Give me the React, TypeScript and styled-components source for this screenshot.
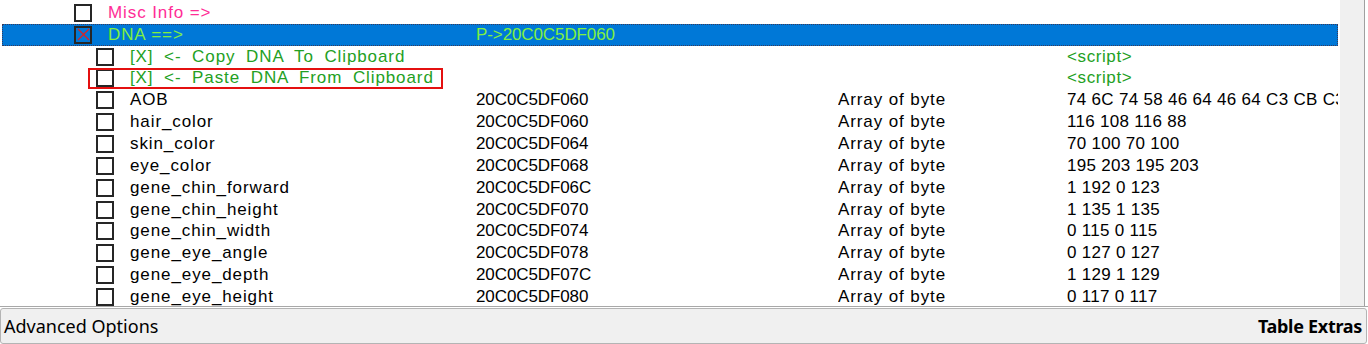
import styled, { createGlobalStyle } from "styled-components";

const Global = createGlobalStyle`
  html, body {
    margin: 0;
    padding: 0;
    background: #fff;
  }
`;

type Entry = {
  level: number;
  name: string;
  address?: string;
  type?: string;
  value?: string;
  color?: string;
  kind?: "group" | "script" | "plain";
  selected?: boolean;
  checked?: boolean;
  marked?: boolean;
};

const rows: Entry[] = [
  { level: 0, name: "Misc Info =>", color: "#ff2d96", kind: "group" },
  { level: 0, name: "DNA ==>", address: "P->20C0C5DF060", color: "#80f040", kind: "group", selected: true, checked: true },
  { level: 1, name: "[X] <- Copy DNA To Clipboard", value: "<script>", color: "#23a023", kind: "script" },
  { level: 1, name: "[X] <- Paste DNA From Clipboard", value: "<script>", color: "#23a023", kind: "script", marked: true },
  { level: 1, name: "AOB", address: "20C0C5DF060", type: "Array of byte", value: "74 6C 74 58 46 64 46 64 C3 CB C3 CB" },
  { level: 1, name: "hair_color", address: "20C0C5DF060", type: "Array of byte", value: "116 108 116 88" },
  { level: 1, name: "skin_color", address: "20C0C5DF064", type: "Array of byte", value: "70 100 70 100" },
  { level: 1, name: "eye_color", address: "20C0C5DF068", type: "Array of byte", value: "195 203 195 203" },
  { level: 1, name: "gene_chin_forward", address: "20C0C5DF06C", type: "Array of byte", value: "1 192 0 123" },
  { level: 1, name: "gene_chin_height", address: "20C0C5DF070", type: "Array of byte", value: "1 135 1 135" },
  { level: 1, name: "gene_chin_width", address: "20C0C5DF074", type: "Array of byte", value: "0 115 0 115" },
  { level: 1, name: "gene_eye_angle", address: "20C0C5DF078", type: "Array of byte", value: "0 127 0 127" },
  { level: 1, name: "gene_eye_depth", address: "20C0C5DF07C", type: "Array of byte", value: "1 129 1 129" },
  { level: 1, name: "gene_eye_height", address: "20C0C5DF080", type: "Array of byte", value: "0 117 0 117" },
];

export default function App() {
  return (
    <Window>
      <Global />
      <ListBox>
        <Tree>
          {rows.map((r, i) => (
            <Row key={i} $selected={!!r.selected}>
              <NameCell $level={r.level}>
                <Check>
                  {r.checked && (
                    <svg width="13" height="13" viewBox="0 0 13 13">
                      <path d="M1 1 L12 12 M12 1 L1 12" stroke="#e02020" strokeWidth="1.2" />
                    </svg>
                  )}
                </Check>
                <Label $color={r.color} $script={r.kind === "script"}>{r.name}</Label>
                {r.marked && <RedBox />}
              </NameCell>
              <Num $color={r.selected ? r.color : undefined}>{r.address}</Num>
              <Cell>{r.type}</Cell>
              <Value $color={r.kind === "script" ? r.color : undefined} $script={r.kind === "script"}>
                {r.value}
              </Value>
            </Row>
          ))}
        </Tree>
        <Gutter />
      </ListBox>
      <BottomBar>
        <BarText>Advanced Options</BarText>
        <BarText $bold>Table Extras</BarText>
      </BottomBar>
    </Window>
  );
}

const Window = styled.div`
  width: 1368px;
  height: 344px;
  display: flex;
  flex-direction: column;
  overflow: hidden;
  font-family: "Liberation Sans", Arial, sans-serif;
  font-size: 17px;
`;

const ListBox = styled.div`
  height: 307px;
  display: flex;
  border-bottom: 1px solid #a8a8a8;
  box-sizing: border-box;
`;

const Tree = styled.div`
  width: 1340px;
  padding: 2px 0 0 2px;
  box-sizing: border-box;
  overflow: hidden;
`;

const Gutter = styled.div`
  width: 24px;
  background: #f0f0f0;
  border-right: 1px solid #a0a0a0;
`;

const Row = styled.div<{ $selected: boolean }>`
  height: 21.85px;
  width: 1336px;
  display: grid;
  grid-template-columns: 474px 362px 229px 1fr;
  align-items: center;
  box-sizing: border-box;
  white-space: nowrap;
  overflow: hidden;
  background: ${({ $selected }) => ($selected ? "#0078d7" : "transparent")};
  outline: ${({ $selected }) => ($selected ? "1px dotted #3a3a5a" : "none")};
  outline-offset: -1px;
  color: #000;
`;

const NameCell = styled.div<{ $level: number }>`
  position: relative;
  display: flex;
  align-items: center;
  height: 100%;
  padding-left: ${({ $level }) => 72 + $level * 22}px;
`;

const Check = styled.div`
  width: 18px;
  height: 18px;
  border: 2px solid #262626;
  box-sizing: border-box;
  background: transparent;
  display: flex;
  align-items: center;
  justify-content: center;
  margin-right: 16px;
  flex-shrink: 0;
`;

const Label = styled.span<{ $color?: string; $script?: boolean }>`
  color: ${({ $color }) => $color || "#000"};
  letter-spacing: 0.9px;
  word-spacing: ${({ $script }) => ($script ? "5px" : "0")};
`;

const RedBox = styled.div`
  position: absolute;
  left: 86px;
  top: 0;
  width: 355px;
  height: 21px;
  border: 2px solid #e41010;
  box-sizing: border-box;
`;

const Cell = styled.span`
  letter-spacing: 0.9px;
  overflow: hidden;
`;

const Num = styled.span<{ $color?: string }>`
  color: ${({ $color }) => $color || "#000"};
  letter-spacing: -0.1px;
`;

const Value = styled.span<{ $color?: string; $script?: boolean }>`
  color: ${({ $color }) => $color || "#000"};
  letter-spacing: ${({ $script }) => ($script ? "0.6px" : "0.3px")};
  overflow: hidden;
`;

const BottomBar = styled.div`
  flex: 1;
  display: flex;
  justify-content: space-between;
  align-items: center;
  background: #f0f0f0;
  border: 1px solid #b4b4b4;
  border-radius: 3px;
  margin: 1px 1px 0 0;
  padding: 0 4px 0 3px;
`;

const BarText = styled.span<{ $bold?: boolean }>`
  font-family: "Noto Sans", "Open Sans", sans-serif;
  font-size: 18px;
  font-weight: ${({ $bold }) => ($bold ? 700 : 400)};
  color: #000;
  letter-spacing: ${({ $bold }) => ($bold ? "-0.3px" : "0")};
`;
